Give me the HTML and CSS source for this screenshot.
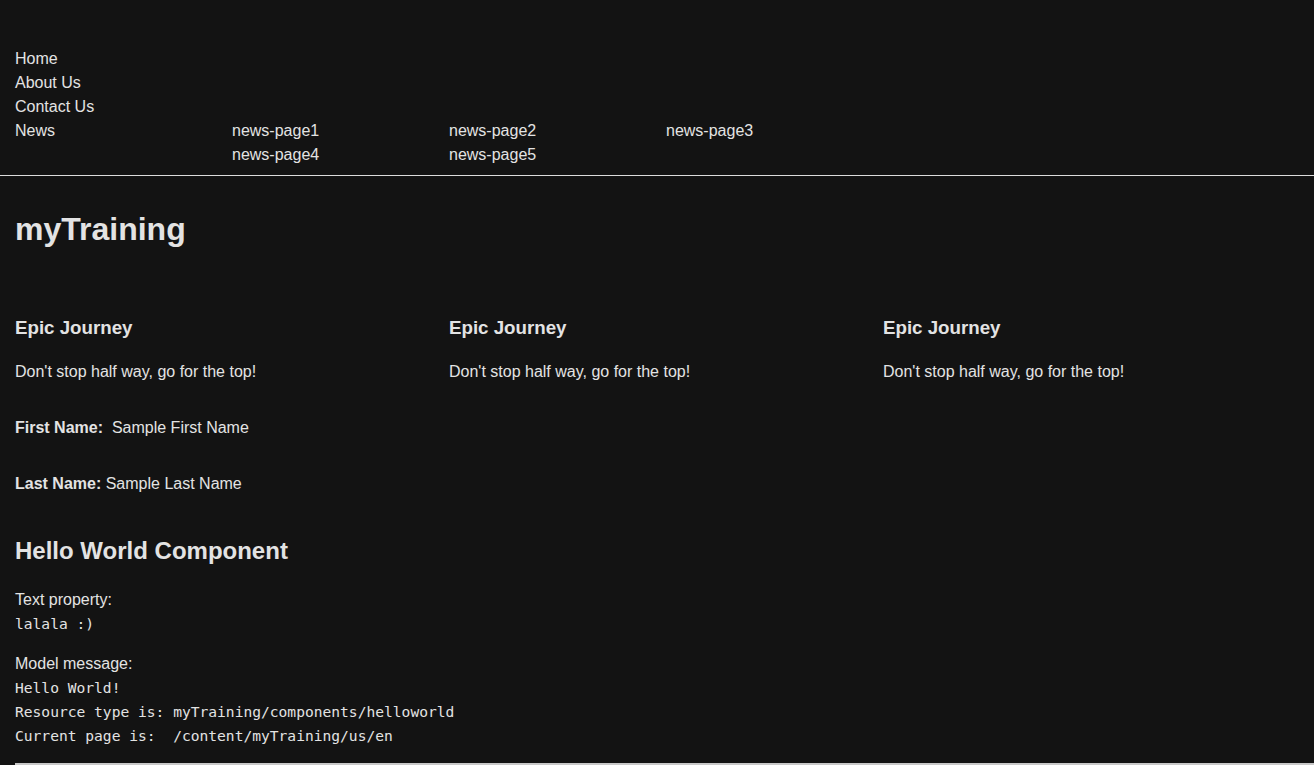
FILE: index.html
```html
<!DOCTYPE html>
<html lang="en">
<head>
<meta charset="utf-8">
<title>myTraining</title>
<link rel="stylesheet" href="styles.css">
</head>
<body>
<header class="header">
  <nav class="nav">
    <ul class="nav-list">
      <li class="nav-item"><a href="#">Home</a></li>
      <li class="nav-item"><a href="#">About Us</a></li>
      <li class="nav-item"><a href="#">Contact Us</a></li>
      <li class="nav-item nav-news">
        <a href="#">News</a>
        <ul class="sub-list">
          <li><a href="#">news-page1</a></li>
          <li><a href="#">news-page2</a></li>
          <li><a href="#">news-page3</a></li>
          <li><a href="#">news-page4</a></li>
          <li><a href="#">news-page5</a></li>
        </ul>
      </li>
    </ul>
  </nav>
  <hr class="header-rule">
</header>
<main class="main">
  <h1 class="title">myTraining</h1>
  <section class="cards">
    <div class="card">
      <h3 class="card-title">Epic Journey</h3>
      <p class="card-text">Don't stop half way, go for the top!</p>
    </div>
    <div class="card">
      <h3 class="card-title">Epic Journey</h3>
      <p class="card-text">Don't stop half way, go for the top!</p>
    </div>
    <div class="card">
      <h3 class="card-title">Epic Journey</h3>
      <p class="card-text">Don't stop half way, go for the top!</p>
    </div>
  </section>
  <p class="field first"><b>First Name:</b>&nbsp; Sample First Name</p>
  <p class="field last"><b>Last Name:</b> Sample Last Name</p>
  <section class="hello">
    <h2 class="hello-title">Hello World Component</h2>
    <div class="prop">
      <div class="prop-label">Text property:</div>
      <pre class="mono">lalala :)</pre>
    </div>
    <div class="prop">
      <div class="prop-label">Model message:</div>
      <pre class="mono">Hello World!
Resource type is: myTraining/components/helloworld
Current page is:  /content/myTraining/us/en</pre>
    </div>
  </section>
  <div class="bottom-bar"></div>
</main>
</body>
</html>
```
FILE: styles.css
```css
html, body {
  margin: 0;
  padding: 0;
}
body {
  background: #131313;
  color: #e3e3e3;
  font-family: "Liberation Sans", Arial, sans-serif;
  font-size: 16px;
  line-height: 24px;
  padding: 0 0 0 15px;
  overflow: hidden;
}
a {
  color: #e3e3e3;
  text-decoration: none;
}
.header {
  padding-top: 47px;
}
.nav-list, .sub-list {
  list-style: none;
  margin: 0;
  padding: 0;
}
.nav-news {
  display: grid;
  grid-template-columns: 217px 651px;
}
.sub-list {
  display: grid;
  grid-template-columns: 217px 217px 217px;
}
.header-rule {
  margin: 8px 0 0 -15px;
  border: 0;
  height: 1px;
  background: #dcdcdc;
}
.title {
  margin: 35px 0 0;
  font-size: 32px;
  line-height: 37px;
  font-weight: bold;
}
.cards {
  display: grid;
  grid-template-columns: 434px 434px 434px;
  margin-top: 69px;
}
.card-title {
  margin: 0;
  font-size: 18.72px;
  line-height: 22px;
  font-weight: bold;
}
.card-text {
  margin: 21px 0 0;
}
.field {
  margin: 32px 0 0;
}
.hello {
  margin-top: 41px;
}
.hello-title {
  margin: 0;
  font-size: 24px;
  line-height: 28px;
  font-weight: bold;
}
.prop {
  margin-top: 23px;
}
.prop + .prop {
  margin-top: 16px;
}
.mono {
  margin: 0;
  font-family: "DejaVu Sans Mono", "Liberation Mono", monospace;
  font-size: 14.6px;
  line-height: 24px;
  white-space: pre;
}
.bottom-bar {
  margin-top: 15px;
  height: 20px;
  background: #c8c8c8;
}
```
